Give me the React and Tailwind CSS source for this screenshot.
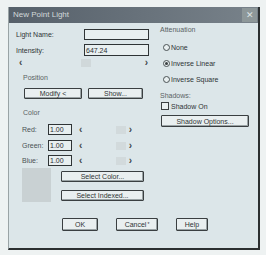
import React from 'react';

const font = { fontFamily: '"Liberation Sans", Arial, sans-serif' };

// small bordered push button
const Btn = ({ w, h = 'h-[11px]', children, className = '' }) => (
  <div className={`${w} ${h} flex shrink-0 items-center justify-center rounded-[1px] border border-[#3a3f41] bg-[#e9eff0] text-[7px] leading-none text-[#2f3436] shadow-[inset_-1px_-1px_0_#9aa3a5] ${className}`}>
    {children}
  </div>
);

const Field = ({ w, value = '' }) => (
  <div className={`${w} h-full flex shrink-0 items-center border border-[#2f3436] bg-[#e8eff0] pl-[1px] text-[7px] leading-none text-[#2a2e30]`}>
    {value}
  </div>
);

const Arrow = ({ dir, className = '' }) => (
  <span className={`text-[10px] font-bold leading-none text-[#3f4749] ${className}`}>{dir === 'left' ? '‹' : '›'}</span>
);

const ColorRow = ({ label, gap }) => (
  <div className={`flex h-[11px] items-center ${gap}`}>
    <span className="w-[32px] pl-[6px] text-[7px] leading-none text-[#4a5254]">{label}</span>
    <Field w="w-[24px]" value="1.00" />
    <div className="ml-[7px] flex w-[53px] items-center">
      <Arrow dir="left" />
      <div className="ml-auto mr-[3px] h-[8px] w-[10px] bg-[#d2dadc]" />
      <Arrow dir="right" />
    </div>
  </div>
);

const Radio = ({ label, checked, className = '' }) => (
  <div className={`flex h-[8px] items-center ${className}`}>
    <div className="ml-[3px] flex h-[7px] w-[7px] items-center justify-center rounded-full border border-[#4a5254] bg-[#e8eff0]">
      {checked && <div className="h-[3px] w-[3px] rounded-full bg-[#3a3f41]" />}
    </div>
    <span className="ml-[1px] text-[7px] leading-none text-[#2f3436]">{label}</span>
  </div>
);

export default function App() {
  return (
    <div className="h-[255px] w-[266px] bg-[#eef2f2] pl-[8px] pt-[7px]" style={font}>
      <div className="flex h-[243px] w-[252px] flex-col border-b-2 border-r-2 border-l border-[#2b2f30] border-l-[#9aa3a5] bg-[#dce6e9]">
        {/* Title bar */}
        <div className="flex h-[16px] items-center justify-between bg-gradient-to-r from-[#56606a] to-[#78828a] pl-[4px] pr-[1px]">
          <span className="text-[8px] leading-none text-[#d2d9da]">New Point Light</span>
          <div className="flex h-[14px] w-[15px] items-center justify-center bg-[#8d9799] text-[9px] leading-none text-[#dde4e5]">✕</div>
        </div>

        <div className="flex">
          {/* Left column */}
          <div className="flex w-[143px] flex-col pl-[7px]">
            <div className="mt-[6px] flex h-[11px] items-center">
              <span className="w-[68px] text-[7px] leading-none text-[#2f3436]">Light Name:</span>
              <Field w="w-[65px]" />
            </div>
            <div className="mt-[4px] flex h-[12px] items-center">
              <span className="w-[68px] text-[7px] leading-none text-[#2f3436]">Intensity:</span>
              <Field w="w-[65px]" value="647.24" />
            </div>
            <div className="ml-[3px] mt-[3px] flex h-[8px] w-[129px] items-center">
              <Arrow dir="left" />
              <div className="ml-[59px] h-[8px] w-[10px] bg-[#d0d8da]" />
              <Arrow dir="right" className="ml-auto" />
            </div>

            <span className="ml-[7px] mt-[7px] h-[8px] text-[7px] leading-[8px] text-[#5a6264]">Position</span>
            <div className="ml-[8px] mt-[6px] flex h-[11px] gap-[6px]">
              <Btn w="w-[58px]">Modify &lt;</Btn>
              <Btn w="w-[55px]">Show...</Btn>
            </div>

            <span className="ml-[7px] mt-[10px] h-[8px] text-[7px] leading-[8px] text-[#5a6264]">Color</span>
            <ColorRow label="Red:" gap="mt-[7px]" />
            <ColorRow label="Green:" gap="mt-[5px]" />
            <ColorRow label="Blue:" gap="mt-[4px]" />

            <div className="mt-[2px] flex">
              <div className="ml-[6px] h-[34px] w-[29px] bg-[#c9d1d3]" />
              <div className="ml-[10px] flex flex-col pt-[3px]">
                <Btn w="w-[83px]">Select Color...</Btn>
                <Btn w="w-[83px]" className="mt-[8px]">Select Indexed...</Btn>
              </div>
            </div>
          </div>

          {/* Right column */}
          <div className="ml-[8px] flex flex-col">
            <span className="mt-[3px] h-[8px] text-[7px] leading-[8px] text-[#5a6264]">Attenuation</span>
            <Radio label="None" className="mt-[9px]" />
            <Radio label="Inverse Linear" checked className="mt-[8px]" />
            <Radio label="Inverse Square" className="mt-[8px]" />
            <span className="mt-[9px] h-[8px] text-[7px] leading-[8px] text-[#5a6264]">Shadows:</span>
            <div className="mt-[2px] flex h-[8px] items-center">
              <div className="ml-[1px] h-[8px] w-[8px] border border-[#3a3f41] bg-[#e8eff0]" />
              <span className="ml-[2px] text-[7px] leading-none text-[#2f3436]">Shadow On</span>
            </div>
            <Btn w="w-[88px]" h="h-[12px]" className="ml-[1px] mt-[5px]">Shadow Options...</Btn>
          </div>
        </div>

        {/* Bottom buttons */}
        <div className="ml-[53px] mt-[16px] flex">
          <Btn w="w-[36px]" h="h-[13px]">OK</Btn>
          <Btn w="w-[42px]" h="h-[13px]" className="ml-[18px]">Cancel <span className="ml-[1px] text-[5px]">*</span></Btn>
          <Btn w="w-[32px]" h="h-[13px]" className="ml-[18px]">Help</Btn>
        </div>
      </div>
    </div>
  );
}
